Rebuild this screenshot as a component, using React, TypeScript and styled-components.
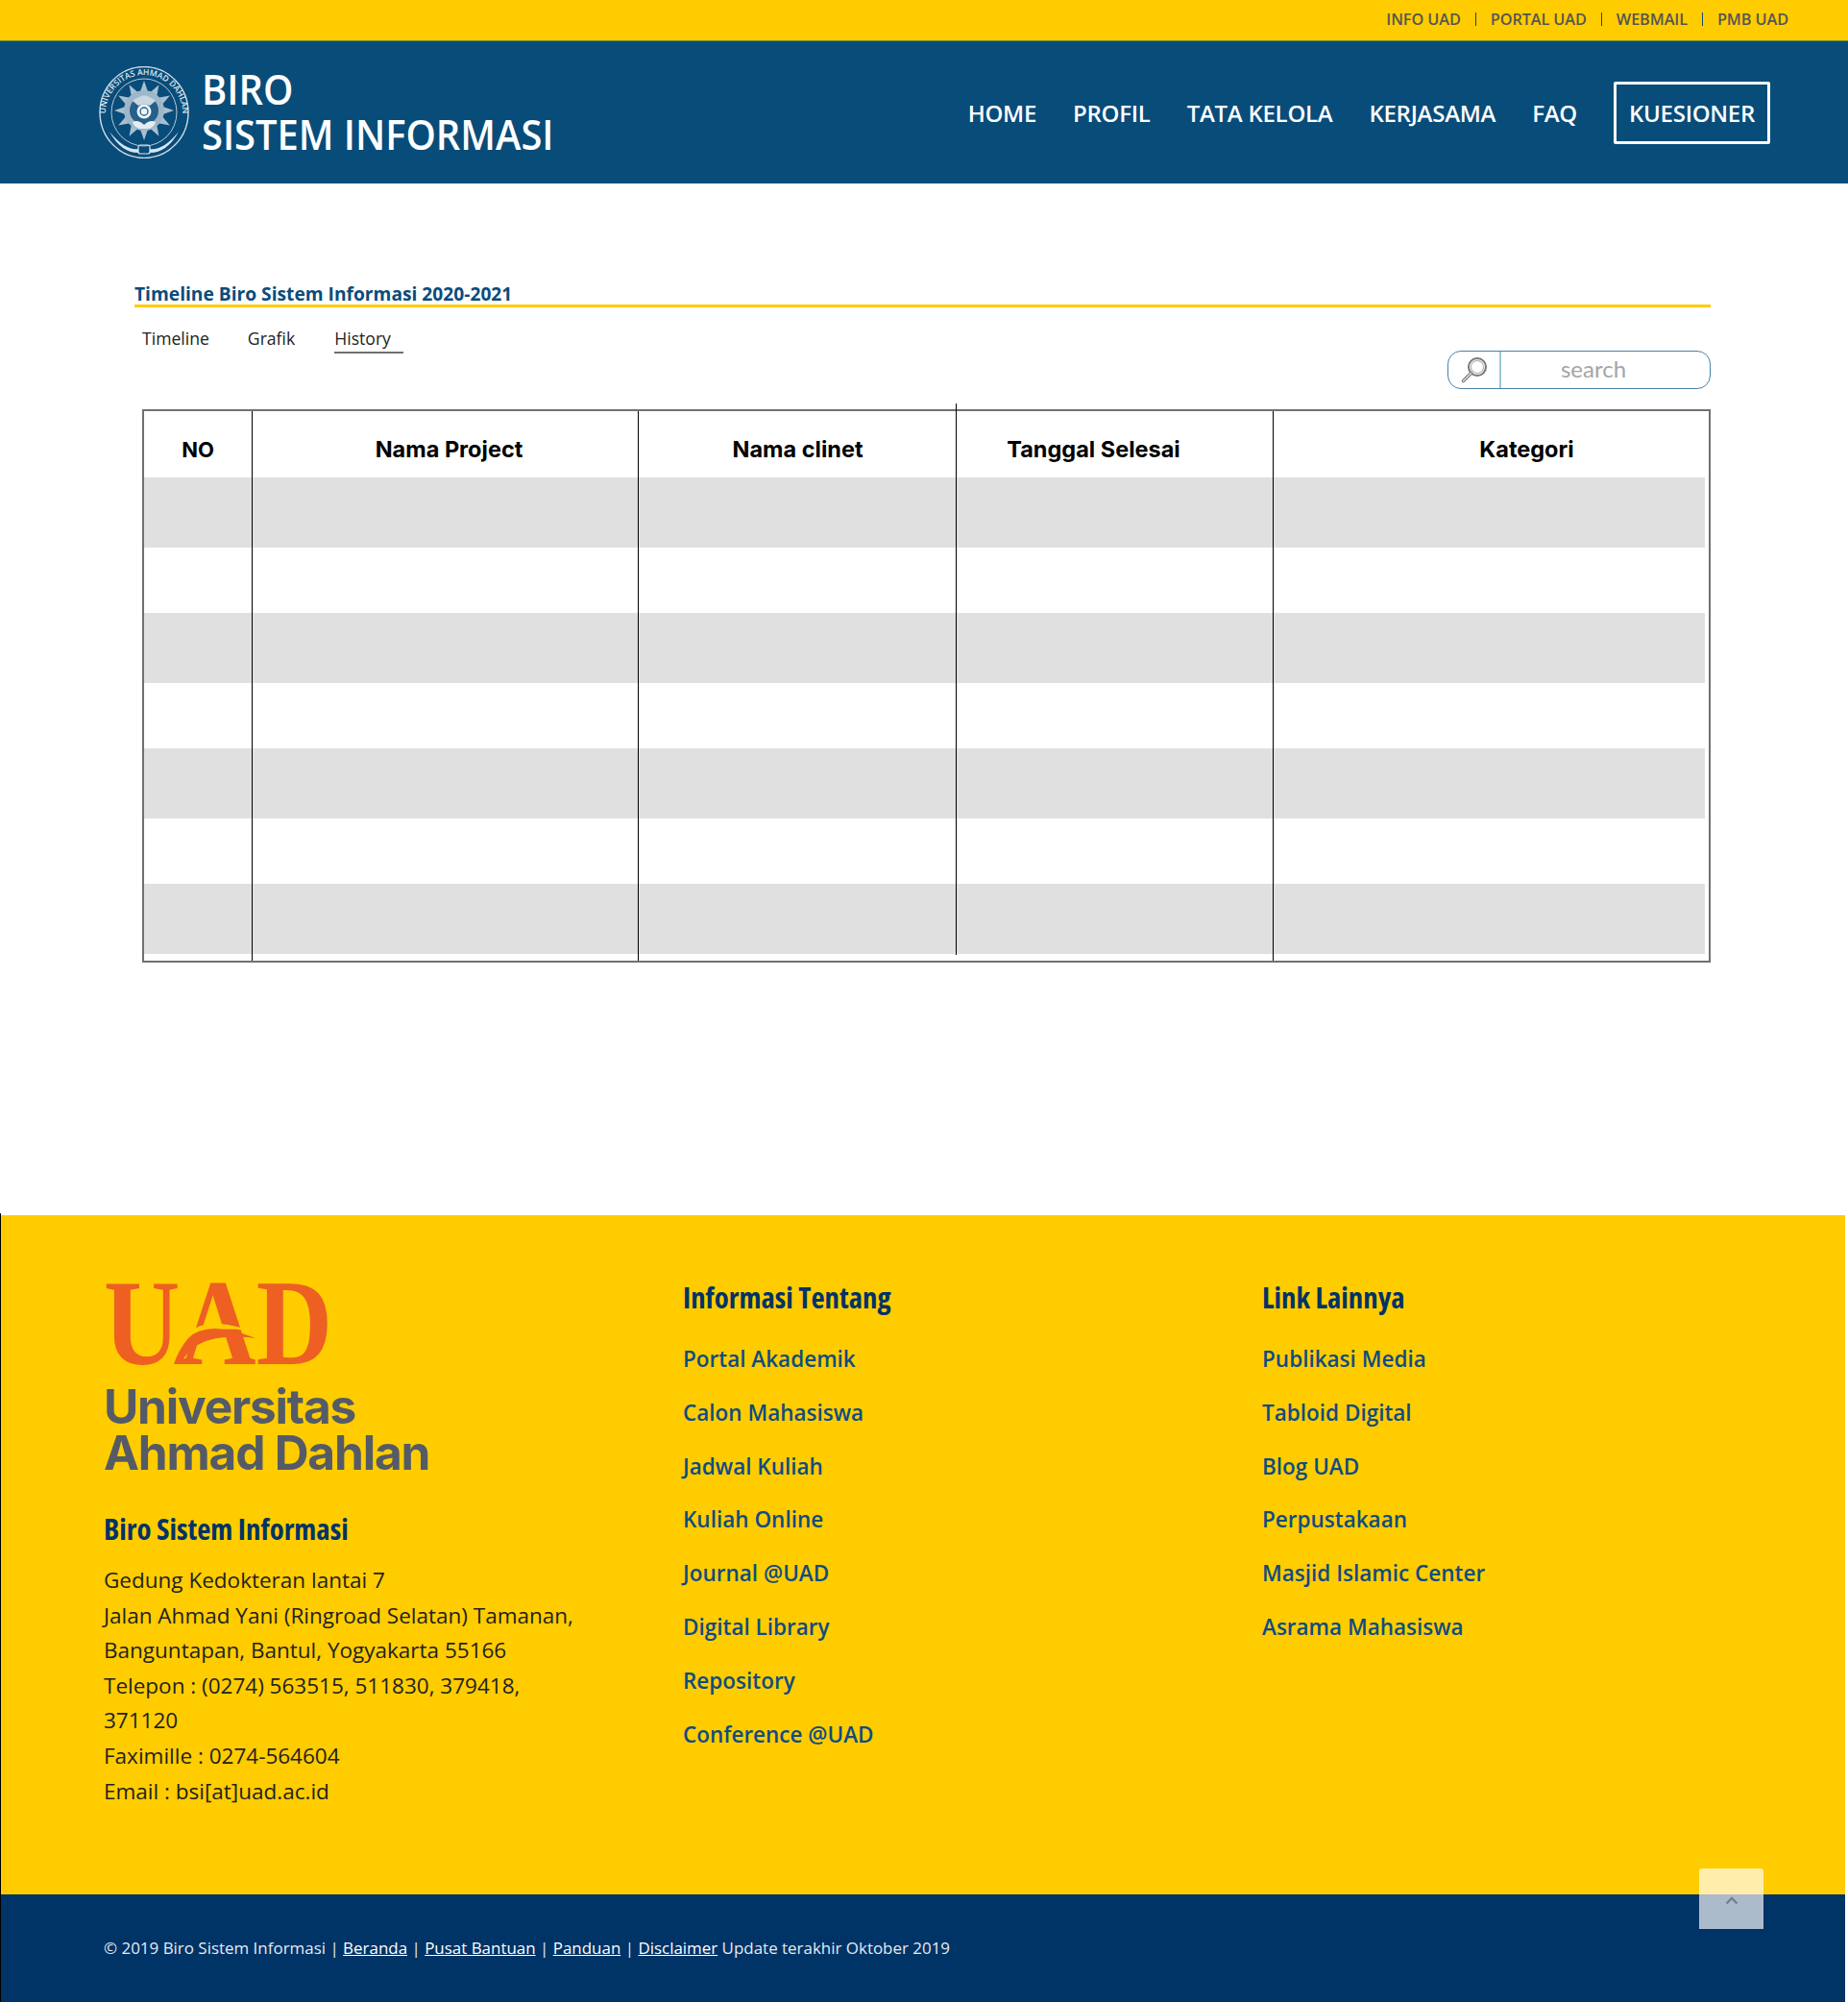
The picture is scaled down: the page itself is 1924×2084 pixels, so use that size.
import React from 'react';
import styled, { createGlobalStyle } from 'styled-components';

const Global = createGlobalStyle`
  html, body { margin: 0; padding: 0; background: #fff; }
  body { font-family: "Open Sans", "Noto Sans", sans-serif; }
  * { box-sizing: border-box; }
`;

const Page = styled.div`
  width: 1924px;
  position: relative;
`;

const TopBar = styled.div`
  height: 43px;
  background: #ffcc00;
  border-bottom: 1px solid #5f8a4a;
  display: flex;
  justify-content: flex-end;
  align-items: center;
  padding: 0 62px 2px 0;
`;

const TopLink = styled.a`
  font-size: 16.3px;
  font-weight: 600;
  color: #555;
  letter-spacing: -0.1px;
`;

const TopSep = styled.span`
  width: 1px;
  height: 14px;
  background: #0a4c7a;
  margin: 0 15px;
`;

const Header = styled.header`
  height: 148px;
  background: #084c7a;
  display: flex;
  align-items: center;
  justify-content: space-between;
  padding: 0 81px 0 102px;
`;

const Brand = styled.div`
  display: flex;
  align-items: center;
  gap: 12px;
`;

const BrandText = styled.div`
  font-size: 44px;
  line-height: 47px;
  font-weight: 600;
  color: #fff;
  font-stretch: 91%;
  white-space: nowrap;
  margin-top: -3px;
  transform: scaleX(0.906);
  transform-origin: left center;
`;

const Nav = styled.nav`
  display: flex;
  align-items: center;
  gap: 38px;
`;

const NavItem = styled.a<{ $boxed?: boolean }>`
  font-size: 24px;
  font-weight: 600;
  color: #fff;
  letter-spacing: -0.26px;
  white-space: nowrap;
  ${p => p.$boxed && `
    display: flex;
    align-items: center;
    justify-content: center;
    width: 163px;
    height: 65px;
    border: 3px solid #fff;
    border-radius: 2px;
  `}
`;

const Main = styled.main`
  height: 1072px;
  padding: 100px 143px 0 140px;
`;

const SectionTitle = styled.h2`
  margin: 0;
  padding-top: 4px;
  font-size: 19.2px;
  line-height: 22px;
  font-weight: 700;
  color: #0a4c7c;
  border-bottom: 3px solid #ffcc00;
`;

const Toolbar = styled.div`
  display: flex;
  justify-content: space-between;
  align-items: flex-start;
  padding: 18px 0 0 8px;
  height: 106px;
`;

const Tabs = styled.div`
  display: flex;
  gap: 40px;
`;

const Tab = styled.a<{ $active?: boolean }>`
  font-size: 17.6px;
  line-height: 28px;
  color: #222;
  ${p => p.$active && `
    width: 72px;
    border-bottom: 2px solid #707070;
    margin-left: 1px;
  `}
`;

const Search = styled.div`
  width: 274px;
  height: 40px;
  margin-top: 27px;
  border: 1px solid #4a80a8;
  border-radius: 14px;
  display: flex;
  align-items: center;
`;

const SearchIcon = styled.div`
  width: 55px;
  height: 100%;
  border-right: 2px solid #9cc8de;
  display: flex;
  align-items: center;
  justify-content: center;
`;

const SearchText = styled.div`
  flex: 1;
  text-align: center;
  font-family: "Lato", sans-serif;
  font-size: 24px;
  line-height: 26px;
  color: #a5a5a5;
  padding: 0 25px 2px 0;
`;

const TableBox = styled.div`
  position: relative;
  width: 1633px;
  margin-left: 8px;
  border: 2px solid #707070;
`;

const Row = styled.div<{ $h: number; $shade?: boolean }>`
  display: grid;
  grid-template-columns: 113px 402px 331px 330px 449px;
  height: ${p => p.$h}px;
  background: ${p => (p.$shade ? '#e0e0e0' : 'transparent')};
  width: 1625px;
`;

const Cell = styled.div<{ $rule?: boolean }>`
  border-right: ${p => (p.$rule === false ? '0' : '1px solid #000')};
`;

const HeadCell = styled(Cell)<{ $pl?: number; $pr?: number; $size?: number }>`
  display: flex;
  align-items: center;
  justify-content: center;
  padding-top: 10px;
  padding-left: ${p => p.$pl ?? 0}px;
  padding-right: ${p => p.$pr ?? 0}px;
  font-family: "Inter", sans-serif;
  font-weight: 700;
  font-size: ${p => p.$size ?? 23.5}px;
  color: #000;
`;

const TallRule = styled.div`
  position: absolute;
  left: 845px;
  top: -8px;
  bottom: 6px;
  width: 1px;
  background: #000;
`;

const FooterWrap = styled.footer`
  width: 1921px;
  border-left: 1px solid #000;
  padding-top: 2px;
`;

const FooterMain = styled.div`
  height: 707px;
  background: #ffcc00;
  padding: 65px 0 0 107px;
  display: grid;
  grid-template-columns: 603px 603px 1fr;
`;

const Column = styled.div`
  display: flex;
  flex-direction: column;
`;

const UadSvg = styled.svg`
  overflow: visible;
  margin-top: 5px;
`;

const LogoText = styled.div`
  font-family: "Inter", sans-serif;
  font-weight: 700;
  font-size: 49.6px;
  line-height: 48px;
  letter-spacing: -1.2px;
  color: #555b66;
  margin-top: 17px;
  white-space: nowrap;
`;

const ColTitle = styled.h3<{ $mb: number; $mt?: number }>`
  margin: ${p => p.$mt ?? 0}px 0 ${p => p.$mb}px;
  font-size: 30.8px;
  line-height: 40px;
  font-weight: 700;
  font-stretch: 77%;
  color: #003366;
`;

const Address = styled.div`
  font-size: 22.5px;
  line-height: 36.6px;
  color: #222;
  width: 500px;
`;

const FootLink = styled.a`
  display: block;
  height: 55.8px;
  font-size: 22.5px;
  line-height: 55.8px;
  font-weight: 600;
  color: #0f4c81;
`;

const FooterBottom = styled.div`
  height: 112px;
  background: #003366;
  padding: 40px 0 0 107px;
  font-size: 16.95px;
  line-height: 32px;
  color: #e4ebf2;
`;

const Legal = styled.a`
  color: #fff;
  text-decoration: underline;
`;

const ScrollTop = styled.div`
  position: absolute;
  left: 1769px;
  top: 1945px;
  width: 67px;
  height: 63px;
  border-radius: 3px 3px 0 0;
  background: rgba(255, 255, 255, 0.67);
  display: flex;
  justify-content: center;
  padding-top: 29px;
`;

function Seal() {
  const rays = Array.from({ length: 12 }, (_, i) => i * 30);
  return (
    <svg width="96" height="96" viewBox="0 0 96 96">
      <defs>
        <path id="sealArc" d="M9 58 A40 40 0 1 1 87 58" fill="none" />
      </defs>
      <ellipse cx="48" cy="48" rx="46" ry="47.5" fill="none" stroke="#cfdce6" strokeWidth="1.4" />
      <ellipse cx="48" cy="48" rx="34" ry="35" fill="none" stroke="#b6c9d7" strokeWidth="1" />
      <text fontFamily="Open Sans, sans-serif" fontSize="8.6" fontWeight="600" fill="#d9e4ec">
        <textPath href="#sealArc" startOffset="50%" textAnchor="middle">UNIVERSITAS AHMAD DAHLAN</textPath>
      </text>
      {rays.map(r => (
        <polygon key={r} points="48,15 52.5,28 43.5,28" fill="#a9bfcf" transform={`rotate(${r} 48 46)`} />
      ))}
      <circle cx="48" cy="46" r="21" fill="#9db6c8" />
      <circle cx="48" cy="46" r="15" fill="#26608a" />
      <path d="M36 36 Q48 25 60 36 L54 41 Q48 38 42 41 Z" fill="#c9d7e1" />
      <circle cx="48" cy="47" r="7.5" fill="#eef3f6" />
      <circle cx="48" cy="47" r="4" fill="none" stroke="#26608a" strokeWidth="1.3" />
      <path d="M36 58 Q42 55 48 61 Q54 55 60 58 Q58 66 48 65 Q38 66 36 58 Z" fill="#e6edf2" />
      <path d="M12 68 Q28 88 42 86 L42 90 Q24 90 12 68 Z" fill="#dbe5ec" />
      <path d="M84 68 Q68 88 54 86 L54 90 Q72 90 84 68 Z" fill="#dbe5ec" />
      <rect x="42" y="82" width="12" height="9" rx="2" fill="none" stroke="#dbe5ec" strokeWidth="1.2" />
    </svg>
  );
}

function UadMark() {
  return (
    <UadSvg width="240" height="88" viewBox="0 0 240 88">
      <text
        x="0"
        y="85"
        fontFamily="Liberation Serif, serif"
        fontWeight="700"
        fontSize="128"
        fill="#ee5f23"
        textLength="238"
        lengthAdjust="spacingAndGlyphs"
      >
        UAD
      </text>
      <path d="M74 86 Q92 42 160 56 Q108 38 90 56 Q78 70 68 86 Z" fill="#ffcc00" transform="translate(-1 -4)" />
      <path d="M80 85 Q96 50 158 58 Q108 38 88 58 Q78 70 73 85 Z" fill="#ee5f23" />
    </UadSvg>
  );
}

function MagnifierIcon() {
  return (
    <svg width="30" height="30" viewBox="0 0 30 30" fill="none">
      <circle cx="18" cy="12" r="9" stroke="#777" strokeWidth="2" />
      <circle cx="18" cy="12" r="6.6" stroke="#b5b5b5" strokeWidth="1.2" />
      <path d="M11.5 18.5 L3.5 26.5" stroke="#777" strokeWidth="3.4" strokeLinecap="round" />
      <path d="M11.5 18.5 L3.5 26.5" stroke="#eee" strokeWidth="1.2" strokeLinecap="round" />
    </svg>
  );
}

const body: [number, boolean][] = [
  [73, true], [68, false], [73, true], [68, false], [73, true], [68, false], [73, true], [7, false],
];

const topLinks = ['INFO UAD', 'PORTAL UAD', 'WEBMAIL', 'PMB UAD'];
const navLinks = ['HOME', 'PROFIL', 'TATA KELOLA', 'KERJASAMA', 'FAQ'];
const infoLinks = ['Portal Akademik', 'Calon Mahasiswa', 'Jadwal Kuliah', 'Kuliah Online', 'Journal @UAD', 'Digital Library', 'Repository', 'Conference @UAD'];
const otherLinks = ['Publikasi Media', 'Tabloid Digital', 'Blog UAD', 'Perpustakaan', 'Masjid Islamic Center', 'Asrama Mahasiswa'];

export default function App() {
  return (
    <Page>
      <Global />
      <TopBar>
        {topLinks.map((l, i) => (
          <React.Fragment key={l}>
            {i > 0 && <TopSep />}
            <TopLink>{l}</TopLink>
          </React.Fragment>
        ))}
      </TopBar>
      <Header>
        <Brand>
          <Seal />
          <BrandText>BIRO<br />SISTEM INFORMASI</BrandText>
        </Brand>
        <Nav>
          {navLinks.map(l => <NavItem key={l}>{l}</NavItem>)}
          <NavItem $boxed>KUESIONER</NavItem>
        </Nav>
      </Header>
      <Main>
        <SectionTitle>Timeline Biro Sistem Informasi 2020-2021</SectionTitle>
        <Toolbar>
          <Tabs>
            <Tab>Timeline</Tab>
            <Tab>Grafik</Tab>
            <Tab $active>History</Tab>
          </Tabs>
          <Search>
            <SearchIcon><MagnifierIcon /></SearchIcon>
            <SearchText>search</SearchText>
          </Search>
        </Toolbar>
        <TableBox>
          <Row $h={69}>
            <HeadCell $size={22}>NO</HeadCell>
            <HeadCell $pl={8}>Nama Project</HeadCell>
            <HeadCell $rule={false}>Nama clinet</HeadCell>
            <HeadCell $pr={44}>Tanggal Selesai</HeadCell>
            <HeadCell $rule={false} $pl={78}>Kategori</HeadCell>
          </Row>
          {body.map(([h, shade], i) => (
            <Row key={i} $h={h} $shade={shade}>
              <Cell />
              <Cell />
              <Cell $rule={false} />
              <Cell />
              <Cell $rule={false} />
            </Row>
          ))}
          <TallRule />
        </TableBox>
      </Main>
      <FooterWrap>
        <FooterMain>
          <Column>
            <UadMark />
            <LogoText>Universitas<br />Ahmad Dahlan</LogoText>
            <ColTitle $mt={35} $mb={16}>Biro Sistem Informasi</ColTitle>
            <Address>
              Gedung Kedokteran lantai 7<br />
              Jalan Ahmad Yani (Ringroad Selatan) Tamanan, Banguntapan, Bantul, Yogyakarta 55166<br />
              Telepon : (0274) 563515, 511830, 379418, 371120<br />
              Faximille : 0274-564604<br />
              Email : bsi[at]uad.ac.id
            </Address>
          </Column>
          <Column>
            <ColTitle $mb={17}>Informasi Tentang</ColTitle>
            {infoLinks.map(l => <FootLink key={l}>{l}</FootLink>)}
          </Column>
          <Column>
            <ColTitle $mb={17}>Link Lainnya</ColTitle>
            {otherLinks.map(l => <FootLink key={l}>{l}</FootLink>)}
          </Column>
        </FooterMain>
        <FooterBottom>
          © 2019 Biro Sistem Informasi | <Legal>Beranda</Legal> | <Legal>Pusat Bantuan</Legal> | <Legal>Panduan</Legal> | <Legal>Disclaimer</Legal> Update terakhir Oktober 2019
        </FooterBottom>
      </FooterWrap>
      <ScrollTop>
        <svg width="14" height="9" viewBox="0 0 14 9" fill="none">
          <path d="M1.5 7.5 L7 2 L12.5 7.5" stroke="#71828f" strokeWidth="2.4" />
        </svg>
      </ScrollTop>
    </Page>
  );
}
